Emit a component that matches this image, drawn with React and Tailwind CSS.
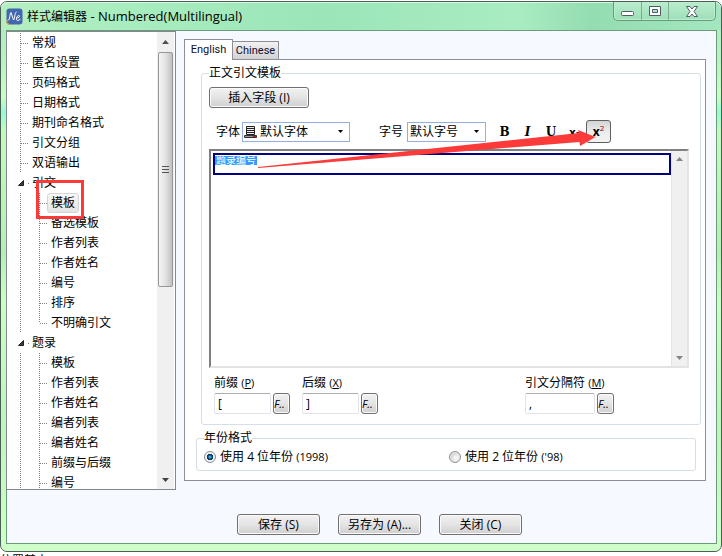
import React from "react";

const TREE = [
  { label: "常规", level: 0 },
  { label: "匿名设置", level: 0 },
  { label: "页码格式", level: 0 },
  { label: "日期格式", level: 0 },
  { label: "期刊命名格式", level: 0 },
  { label: "引文分组", level: 0 },
  { label: "双语输出", level: 0 },
  { label: "引文", level: 0, open: true },
  { label: "模板", level: 1, selected: true },
  { label: "备选模板", level: 1 },
  { label: "作者列表", level: 1 },
  { label: "作者姓名", level: 1 },
  { label: "编号", level: 1 },
  { label: "排序", level: 1 },
  { label: "不明确引文", level: 1, last: true },
  { label: "题录", level: 0, open: true },
  { label: "模板", level: 1 },
  { label: "作者列表", level: 1 },
  { label: "作者姓名", level: 1 },
  { label: "编者列表", level: 1 },
  { label: "编者姓名", level: 1 },
  { label: "前缀与后缀", level: 1 },
  { label: "编号", level: 1 },
];

const V_DOTS = "w-px bg-[repeating-linear-gradient(180deg,#808080_0_1px,transparent_1px_2px)]";
const H_DOTS = "h-px bg-[repeating-linear-gradient(90deg,#808080_0_1px,transparent_1px_2px)]";
const BUTTON =
  "rounded-[3px] border border-[#707070] bg-linear-to-b from-[#f2f2f2] via-[#e4e4e4] to-[#cfcfcf] shadow-[inset_0_0_0_1px_#fafafa] whitespace-nowrap";
const FIELD =
  "h-[21px] rounded-[2px] border border-[#e2e3ea] border-t-[#abadb3] bg-white px-[3px] text-[12px]";

function Caret({ up, className = "" }) {
  return (
    <svg width="7" height="4" viewBox="0 0 7 4" className={className} aria-hidden="true">
      <path d={up ? "M0 4 3.5 0 7 4Z" : "M0 0H7L3.5 4Z"} fill="currentColor" />
    </svg>
  );
}

function TreeRow({ label, level, open, selected, last }) {
  return (
    <li className="flex h-5 items-center" role="treeitem" aria-selected={!!selected}>
      {open ? (
        <span className="ml-[11px] flex w-[14px] items-center gap-[4px]">
          <svg width="6" height="6" viewBox="0 0 6 6" aria-hidden="true">
            <path d="M5.5 0.5V5.5H0.5Z" fill="#404040" stroke="#202020" />
          </svg>
          <i className="h-px w-px bg-[#808080]" />
        </span>
      ) : (
        <span className="ml-[13px] flex h-full w-3 items-center">
          <i className={"h-full " + V_DOTS} />
          {level === 0 && <i className={"w-2 " + H_DOTS} />}
        </span>
      )}
      {level === 1 && (
        <span className="ml-[7px] flex h-full w-3 items-center">
          <i className={(last ? "h-1/2 self-start " : "h-full ") + V_DOTS} />
          <i className={"w-2 " + H_DOTS} />
        </span>
      )}
      {selected ? (
        <span className="-ml-1 rounded-[3px] border border-[#d5d5d5] bg-linear-to-b from-[#f8f8f8] to-[#e4e4e4] px-[3px] leading-[18px]">
          {label}
        </span>
      ) : (
        <span>{label}</span>
      )}
    </li>
  );
}

function Select({ label, value, className = "", icon }) {
  return (
    <span className={"grid h-5 " + className}>
      <select
        aria-label={label}
        className={
          "col-start-1 row-start-1 h-5 w-full appearance-none border border-[#93b0dc] bg-white text-[12px] leading-[18px] " +
          (icon ? "pl-[17px]" : "pl-[2px]")
        }
      >
        <option>{value}</option>
      </select>
      {icon && <span className="pointer-events-none col-start-1 row-start-1 ml-[2px] self-center">{icon}</span>}
      <svg
        width="5"
        height="3"
        viewBox="0 0 5 3"
        className="pointer-events-none col-start-1 row-start-1 mr-[7px] self-center justify-self-end"
        aria-hidden="true"
      >
        <path d="M0 0H5L2.5 3Z" fill="#000" />
      </svg>
    </span>
  );
}

function AffixField({ id, text, hotkey, value, width }) {
  return (
    <div className="flex flex-col">
      <label htmlFor={id} className="h-[17px] leading-[14px]">
        {text} <span className="text-[11px]">(<u>{hotkey}</u>)</span>
      </label>
      <div className="flex gap-[2px]">
        <input id={id} defaultValue={value} className={FIELD + " " + width} />
        <button type="button" className={BUTTON + " h-[21px] w-[17px] text-left text-[11px] italic"}>
          F..
        </button>
      </div>
    </div>
  );
}

function Radio({ name, digits, example, checked, className = "" }) {
  return (
    <label className={"flex items-center gap-1 " + className}>
      <input
        type="radio"
        name={name}
        defaultChecked={checked}
        className="size-3 appearance-none rounded-full border border-[#8e8f8f] bg-[radial-gradient(circle_at_60%_60%,#f4f4f4_20%,#c4c8cc_70%)] shadow-[inset_0_0_0_1px_#f4f4f4] checked:bg-[radial-gradient(circle,#3fb5e8_8%,#0b4a78_28%,#12334f_42%,#e8eef2_50%)]"
      />
      <span>
        使用 {digits} 位年份 <span className="text-[11px]">{example}</span>
      </span>
    </label>
  );
}

export default function App() {
  return (
    <div className="min-h-screen w-full overflow-hidden bg-white font-['Open_Sans','Noto_Sans_CJK_SC',sans-serif] text-[12px] leading-[14px] text-black">
      <div className="relative mt-px rounded-[7px] border border-[#4c5f56] bg-[linear-gradient(180deg,#a6e9c4_0,#b9f3c2_60px,#c9fdc4_95px,#96fbd2_110px,#c4fbbd_130px,#b6efb4_250px,#cbffc4_300px,#bdf5ba_420px,#d0ffca_100%)] px-[5px] pb-[7px]">
        <header className="-mx-[5px] flex h-7 items-start justify-between rounded-t-[6px] bg-[linear-gradient(90deg,#b5efc0_0,#a9edbf_16%,#9be5b9_45%,#a9ecc2_72%,#94dcb1_82%,#a3e7bf_100%)] shadow-[inset_0_1px_0_#d6f8e2] pl-[5px]">
          <div className="flex h-7 items-center gap-1">
            <svg width="17" height="17" viewBox="0 0 17 17" aria-hidden="true">
              <rect x="0.5" y="0.5" width="16" height="16" rx="3" fill="#4267b0" />
              <path d="M0.5 11Q1 16 6 16.5H2.500Q0.500 16.500 0.500 14Z" fill="#f28c28" />
              <path d="M1.500 12.500C4.500 12.500 3.500 5 5 4.500L7.500 12C9 11 8.500 4.500 10.500 4M10.500 10C13 10 14.500 8 13 7.500C10.500 7.500 9.500 12.500 11.500 12.500Q13 12.500 14.500 11" fill="none" stroke="#fff" />
            </svg>
            <h1 className="text-[13px] leading-[18px]">
              <span className="text-[12px]">样式编辑器</span> - Numbered(Multilingual)
            </h1>
          </div>
          <div className="mr-[5px] flex h-[19px] rounded-b-[5px] border border-t-0 border-[#6a9a7d] bg-linear-to-b from-[#b9edcd] to-[#9edfb9] shadow-[inset_0_0_0_1px_#bcefd0]">
            <button type="button" aria-label="最小化" className="flex w-7 items-center justify-center border-r border-[#7fae92]">
              <svg width="13" height="12" viewBox="0 0 13 12"><rect x="0.500" y="6.500" width="12" height="4" rx="1" fill="#fff" stroke="#535c66" /></svg>
            </button>
            <button type="button" aria-label="最大化" className="flex w-[27px] items-center justify-center border-r border-[#7fae92]">
              <svg width="12" height="10" viewBox="0 0 12 10"><path d="M0.500 0.500H11.500V9.500H0.500ZM3.500 3.500V6.500H8.500V3.500Z" fill="#fff" fillRule="evenodd" stroke="#535c66" /></svg>
            </button>
            <button type="button" aria-label="关闭" className="flex w-[46px] items-center justify-center">
              <svg width="12" height="11" viewBox="0 0 12 11"><path d="M0.500 0.500H4L6 3 8 0.500H11.500L8 5.500 11.500 10.500H8L6 8 4 10.500H0.500L4 5.500Z" fill="#fff" stroke="#535c66" /></svg>
            </button>
          </div>
        </header>

        <main className="-mr-px border border-[#6c9b7a] bg-[#f6f9ff] pb-2 pr-[10px]">
          <div className="flex items-start gap-2">
            <aside className="relative -ml-px flex h-[459px] w-[170px] shrink-0 border border-[#828790] bg-white">
              <ul className="min-w-0 flex-1 overflow-hidden pt-px" role="tree">
                {TREE.map((item, i) => (
                  <TreeRow key={i} {...item} />
                ))}
              </ul>
              <div className="mr-px flex w-[17px] flex-col items-center bg-[#f0f0f0]">
                <span className="flex h-5 items-center text-[#505050]"><Caret up /></span>
                <span className="flex h-[235px] w-[15px] items-center justify-center rounded-[2px] border border-[#979797] bg-linear-to-r from-[#f5f5f5] via-[#e3e3e3] to-[#c0c0c4]">
                  <svg width="7" height="8" viewBox="0 0 7 8" aria-hidden="true">
                    <path d="M0 .5H7M0 3.500H7M0 6.500H7" stroke="#555" />
                  </svg>
                </span>
                <span className="mt-auto flex h-[18px] items-center text-[#404040]"><Caret /></span>
              </div>
              <span className="pointer-events-none absolute left-[29px] top-[148px] h-[39px] w-[48px] border-[3px] border-[#fb3a3a]" />
            </aside>

            <section className="min-w-0 flex-1 pt-2">
              <div role="tablist" className="relative -mb-px flex items-end font-[Roboto,sans-serif] text-[11px] text-[#101030]">
                <button type="button" role="tab" aria-selected="true" className="h-[21px] w-[49px] border border-b-0 border-[#8c8e99] bg-white">
                  English
                </button>
                <button type="button" role="tab" aria-selected="false" className="h-[19px] w-[46px] border border-l-0 border-[#8c8e99] bg-linear-to-b from-[#f2f2f2] to-[#d2d2d2]">
                  Chinese
                </button>
              </div>

              <div className="border border-[#8c8e99] bg-white pb-[9px] pt-[6px]">
                <fieldset className="ml-4 mr-1 rounded-[3px] border border-[#d5dfe5] pb-[10px] pl-[7px] pr-[11px]">
                  <legend className="h-[14px]">正文引文模板</legend>
                  <button type="button" className={BUTTON + " mt-[7px] block h-[21px] w-[100px]"}>
                    插入字段 (I)
                  </button>

                  <div className="mt-3 flex h-[23px] items-center pl-[7px]">
                    <span className="mr-[2px]">字体</span>
                    <Select
                      label="字体"
                      value="默认字体"
                      className="w-[108px]"
                      icon={
                        <svg width="13" height="12" viewBox="0 0 13 12" aria-hidden="true">
                          <path d="M2.500 .5H10.500V8.500H2.500ZM3 2.500H10M3 4.500H10M3 6.500H10" fill="#eee" stroke="#222" />
                          <path d="M.5 9.500H12.500V11.500H.5Z" fill="#999" stroke="#333" />
                          <path d="M9 10.500H12" stroke="#e01010" />
                        </svg>
                      }
                    />
                    <span className="ml-[29px] mr-1">字号</span>
                    <Select label="字号" value="默认字号" className="w-[79px]" />
                    <div className="ml-[7px] flex items-center font-['DejaVu_Serif',serif] text-[12px] font-bold">
                      <button type="button" className="w-[23px]">B</button>
                      <button type="button" className="w-[23px] italic">I</button>
                      <button type="button" className="w-6 underline">U</button>
                      <button type="button" aria-label="下标" className="flex w-[23px] items-end justify-center font-['Open_Sans',sans-serif] text-[11px]">
                        x<span className="text-[7px] leading-[8px] text-[#800000]">2</span>
                      </button>
                      <button type="button" aria-label="上标" className="flex h-[23px] w-[25px] items-center justify-center rounded-[3px] border border-[#606060] bg-linear-to-b from-[#d4d4d4] via-[#ececec] to-[#f3f3f3] font-['Open_Sans',sans-serif] text-[12px]">
                        x<sup className="text-[8px] font-normal text-[#900000]">2</sup>
                      </button>
                    </div>
                  </div>

                  <div className="mt-[6px] flex h-[219px] border-2 border-[#e3e3e3] border-l-[#808080] border-t-[#808080]">
                    <div className="min-w-0 flex-1 py-[2px] pl-[2px]">
                      <div
                        contentEditable
                        suppressContentEditableWarning
                        role="textbox"
                        aria-label="正文引文模板"
                        className="h-[22px] border-2 border-[#000080] outline-none"
                      >
                        <mark className="mt-px block h-[9px] w-fit overflow-hidden bg-[#3399ff] px-px text-[10px] leading-[9px] text-white">题录编号</mark>
                      </div>
                    </div>
                    <div className="flex w-4 flex-col items-center justify-between border-l border-[#e4e4e4] bg-[#f0f0f0] py-[6px] text-[#858585]">
                      <Caret up />
                      <Caret />
                    </div>
                  </div>

                  <div className="mt-2 flex pl-[5px]">
                    <AffixField id="prefix" text="前缀" hotkey="P" value="[" width="w-[57px]" />
                    <span className="w-3" />
                    <AffixField id="suffix" text="后缀" hotkey="X" value="]" width="w-[57px]" />
                    <span className="min-w-3 flex-1" />
                    <AffixField id="sep" text="引文分隔符" hotkey="M" value="," width="w-[70px]" />
                    <span className="w-[75px]" />
                  </div>
                </fieldset>

                <fieldset className="ml-[11px] mr-[9px] mt-[6px] rounded-[3px] border border-[#d5dfe5] pb-[6px] pl-[7px]">
                  <legend className="h-[14px]">年份格式</legend>
                  <div className="mt-[5px] flex">
                    <Radio name="year" digits="4" example="(1998)" checked className="w-[245px]" />
                    <Radio name="year" digits="2" example="('98)" />
                  </div>
                </fieldset>
              </div>
            </section>
          </div>

          <footer className="mt-6 flex gap-[18px] pl-[230px]">
            {["保存 (S)", "另存为 (A)...", "关闭 (C)"].map((text) => (
              <button key={text} type="button" className={BUTTON + " h-[21px] w-[83px]"}>
                {text}
              </button>
            ))}
          </footer>
        </main>

        <svg
          className="pointer-events-none absolute left-[256px] top-[126px]"
          width="342"
          height="42"
          viewBox="257 128 342 42"
          aria-hidden="true"
        >
          <path d="M258 167 579 133 578 130 595.500 137 580 146 579.500 142 258 168Z" fill="#fb3a3a" />
        </svg>
      </div>
      <p className="h-1 overflow-hidden leading-[18px]">位置其中</p>
    </div>
  );
}
